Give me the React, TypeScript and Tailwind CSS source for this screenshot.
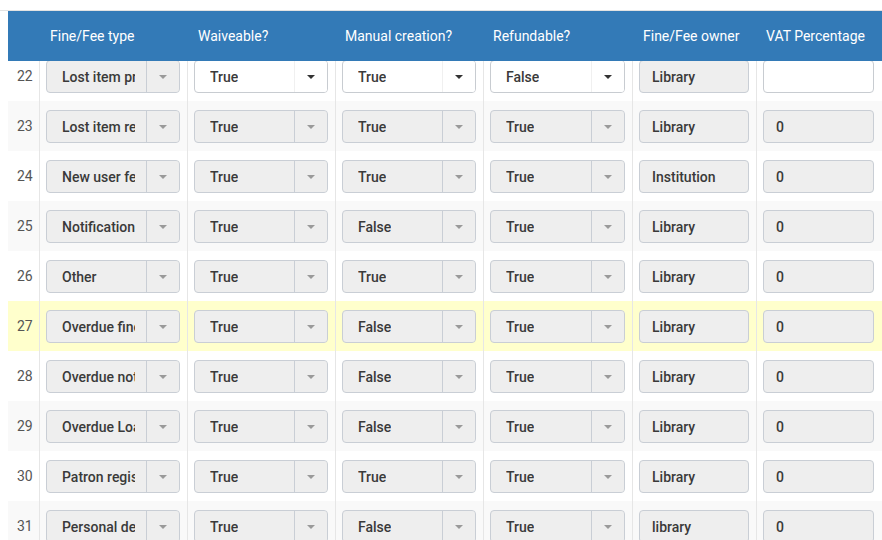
import React from "react";

type Row = {
  n: number;
  type: string;
  waive: string;
  manual: string;
  refund: string;
  owner: string;
  vat: string;
  editing?: boolean;
  hover?: boolean;
};

const rows: Row[] = [
  { n: 22, type: "Lost item processing fee", waive: "True", manual: "True", refund: "False", owner: "Library", vat: "", editing: true },
  { n: 23, type: "Lost item replacement fee", waive: "True", manual: "True", refund: "True", owner: "Library", vat: "0" },
  { n: 24, type: "New user fee", waive: "True", manual: "True", refund: "True", owner: "Institution", vat: "0" },
  { n: 25, type: "Notification fee", waive: "True", manual: "False", refund: "True", owner: "Library", vat: "0" },
  { n: 26, type: "Other", waive: "True", manual: "True", refund: "True", owner: "Library", vat: "0" },
  { n: 27, type: "Overdue fine", waive: "True", manual: "False", refund: "True", owner: "Library", vat: "0", hover: true },
  { n: 28, type: "Overdue notification fee", waive: "True", manual: "False", refund: "True", owner: "Library", vat: "0" },
  { n: 29, type: "Overdue Loan fee", waive: "True", manual: "False", refund: "True", owner: "Library", vat: "0" },
  { n: 30, type: "Patron registration fee", waive: "True", manual: "True", refund: "True", owner: "Library", vat: "0" },
  { n: 31, type: "Personal delivery fee", waive: "True", manual: "False", refund: "True", owner: "library", vat: "0" },
];

const cols = "grid grid-cols-[32px_148px_148px_148px_149px_124px_1fr]";

function Select({ value, enabled }: { value: string; enabled?: boolean }) {
  return (
    <div
      className={
        "flex h-[33px] w-full overflow-hidden rounded-[4px] border " +
        (enabled ? "border-[#c8ccd1] bg-white" : "border-[#c9ced5] bg-[#eeeeee]")
      }
    >
      <div className="flex min-w-0 flex-1 items-center pl-[15px] pr-[11px] pt-[2px]">
        <div className="overflow-hidden whitespace-nowrap text-[14px] font-medium text-[#3a3a3a]">{value}</div>
      </div>
      <div
        className={
          "flex w-[33px] shrink-0 items-center justify-center border-l " +
          (enabled ? "border-[#f0f0f0] bg-white" : "border-[#c9ced5] bg-[#eeeeee]/60")
        }
      >
        <span
          className={
            "h-0 w-0 border-x-[4px] border-t-[4px] border-x-transparent " +
            (enabled ? "border-t-[#333]" : "border-t-[#9a9a9a]")
          }
        />
      </div>
    </div>
  );
}

function Field({ value, enabled }: { value: string; enabled?: boolean }) {
  return (
    <div
      className={
        "flex h-[33px] w-full items-center rounded-[4px] border pl-[12px] pt-[2px] text-[14px] font-medium text-[#3a3a3a] " +
        (enabled ? "border-[#c8ccd1] bg-white" : "border-[#c9ced5] bg-[#eeeeee]")
      }
    >
      {value}
    </div>
  );
}

function Cell({ children, last }: { children: React.ReactNode; last?: boolean }) {
  return (
    <div
      className={
        "flex items-start pb-[8px] pl-[6px] pt-[9px] " +
        (last ? "pr-[8px]" : "border-r border-[#e6e6e6] pr-[7px]")
      }
    >
      {children}
    </div>
  );
}

export default function App() {
  return (
    <div
      className="h-[540px] w-[882px] overflow-hidden bg-white"
      style={{ fontFamily: "Roboto, 'Liberation Sans', sans-serif" }}
    >
      <div className="h-[11px] border-b border-[#e2e2e2] bg-white" />
      <div className="pl-[8px]">
        <div className={cols + " relative z-10 h-[50px] items-center bg-[#337ab7] text-[14px] text-white"}>
          <div />
          <div className="pl-[10px]">Fine/Fee type</div>
          <div className="pl-[10px]">Waiveable?</div>
          <div className="pl-[9px]">Manual creation?</div>
          <div className="pl-[9px]">Refundable?</div>
          <div className="pl-[10px]">Fine/Fee owner</div>
          <div className="pl-[9px]">VAT Percentage</div>
        </div>
        {rows.map((r, i) => (
          <div
            key={r.n}
            className={
              cols +
              " h-[50px] " +
              (i === 0 ? "-mt-[10px] " : "") +
              (r.hover ? "bg-[#ffffcc]" : r.n % 2 === 1 ? "bg-[#f9f9f9]" : "bg-white")
            }
          >
            <div className="flex items-center border-r border-[#e6e6e6] pl-[9px] pt-[1px] text-[14px] text-[#555]">
              {r.n}
            </div>
            <Cell>
              <Select value={r.type} />
            </Cell>
            <Cell>
              <Select value={r.waive} enabled={r.editing} />
            </Cell>
            <Cell>
              <Select value={r.manual} enabled={r.editing} />
            </Cell>
            <Cell>
              <Select value={r.refund} enabled={r.editing} />
            </Cell>
            <Cell>
              <Field value={r.owner} />
            </Cell>
            <Cell last>
              <Field value={r.vat} enabled={r.editing} />
            </Cell>
          </div>
        ))}
      </div>
    </div>
  );
}
